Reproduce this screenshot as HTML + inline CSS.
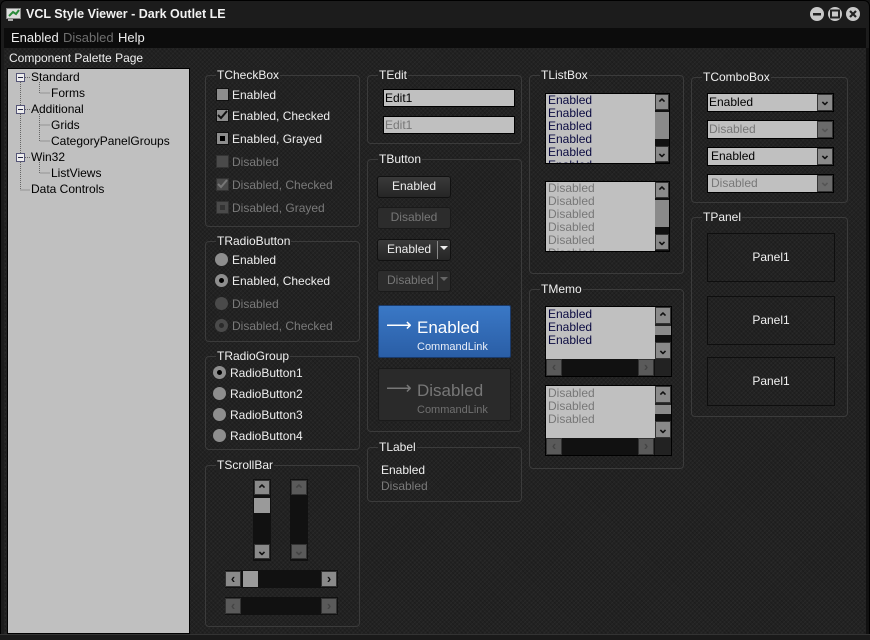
<!DOCTYPE html>
<html><head><meta charset="utf-8"><style>
*{margin:0;padding:0;box-sizing:border-box}
body{width:870px;height:640px;overflow:hidden;background:#141414;font-family:"Liberation Sans",sans-serif;font-size:12px;color:#eee;position:relative}
.a{position:absolute}
.win{left:0;top:0;width:870px;height:640px;background:#1c1c1c;border:1px solid #000;border-radius:6px 6px 0 0}
.client{left:4px;top:48px;width:862px;height:586px;background:#222;background-image:repeating-linear-gradient(45deg,rgba(0,0,0,.18) 0 1px,transparent 1px 3px),repeating-linear-gradient(-45deg,rgba(255,255,255,.03) 0 1px,transparent 1px 3px)}
.g{border:1px solid #3b3b3b;border-radius:4px}
.gl{position:absolute;top:-8px;left:10px;background:#222;padding:0 1px;color:#f0f0f0;line-height:14px}
.t{white-space:nowrap;line-height:14px}
.dis{color:#7a7a7a}
.cb{width:13px;height:13px;background:#8d8d8d;border:1px solid #111}
.rd{width:13px;height:13px;border-radius:50%;background:#8e8e8e}
.ed{background:#c0c0c0;border:1px solid #000;color:#000;padding:1px 0 0 1px;line-height:14px}
.btn{background:linear-gradient(#3a3a3a,#262626);border:1px solid #111;border-radius:3px;text-align:center;color:#eee;line-height:19px}
.btn.dis{color:#777;background:#2c2c2c;border-color:#1a1a1a}
.lb{background:#c0c0c0;border:1px solid #000;overflow:hidden;color:#0a0a40;line-height:13px;padding-left:2px}
.sb{background:#8a8a8a;border:1px solid #333;color:#111;font-size:13px;text-align:center;font-weight:bold;overflow:hidden}
.pan{border:1px solid #0e0e0e;text-align:center;color:#f0f0f0}
</style></head><body>
<div class="a win"></div>
<svg class="a" style="left:6px;top:7px" width="16" height="14"><rect x="0.5" y="1.5" width="14" height="10" fill="#ddd" stroke="#888"/><path d="M3 9 L7 5 L10 7 L13 3" stroke="#2a8a3a" stroke-width="2" fill="none"/><rect x="2" y="12" width="5" height="2" fill="#aaa"/></svg>
<div class="a t" style="left:26px;top:7px;font-weight:bold;color:#f2f2f2;font-size:12.5px">VCL Style Viewer - Dark Outlet LE</div>
<svg class="a" style="left:809px;top:6px" width="54" height="16">
<circle cx="8" cy="8" r="7" fill="#c8c8c8"/><rect x="4" y="7" width="8" height="2.5" fill="#222"/>
<circle cx="26" cy="8" r="7" fill="#c8c8c8"/><rect x="22" y="4.5" width="8" height="7" fill="none" stroke="#222" stroke-width="2"/>
<circle cx="44" cy="8" r="7" fill="#c8c8c8"/><path d="M41 5 L47 11 M47 5 L41 11" stroke="#222" stroke-width="2.2"/></svg>
<div class="a" style="left:4px;top:28px;width:862px;height:20px;background:#0c0c0c"></div>
<div class="a t" style="left:11px;top:31px;font-size:13px">Enabled</div>
<div class="a t" style="left:63px;top:31px;font-size:13px;color:#6f6f6f">Disabled</div>
<div class="a t" style="left:118px;top:31px;font-size:13px">Help</div>
<div class="a client"></div>
<div class="a t" style="left:9px;top:51px;color:#f0f0f0">Component Palette Page</div>
<div class="a" style="left:7px;top:68px;width:183px;height:566px;background:#c0c0c0;border:1px solid #000"></div>
<svg class="a" style="left:14px;top:72px" width="60" height="125">
<g stroke="#666" stroke-dasharray="1 1" fill="none">
<path d="M6.5 10 V118 H16"/><path d="M25.5 10 V21 H36"/><path d="M25.5 42 V69 H36 M25.5 53 H36"/><path d="M25.5 90 V101 H36"/><path d="M11 5.5 H16 M11 37.5 H16 M11 85.5 H16"/></g>
<g fill="#eee" stroke="#557"><rect x="2.5" y="1.5" width="8" height="8"/><rect x="2.5" y="33.5" width="8" height="8"/><rect x="2.5" y="81.5" width="8" height="8"/></g>
<g stroke="#224"><path d="M4 5.5H9M4 37.5H9M4 85.5H9"/></g></svg>
<div class="a t" style="left:31px;top:70px;color:#000">Standard</div>
<div class="a t" style="left:51px;top:86px;color:#000">Forms</div>
<div class="a t" style="left:31px;top:102px;color:#000">Additional</div>
<div class="a t" style="left:51px;top:118px;color:#000">Grids</div>
<div class="a t" style="left:51px;top:134px;color:#000">CategoryPanelGroups</div>
<div class="a t" style="left:31px;top:150px;color:#000">Win32</div>
<div class="a t" style="left:51px;top:166px;color:#000">ListViews</div>
<div class="a t" style="left:31px;top:182px;color:#000">Data Controls</div>

<div class="a g" style="left:205px;top:75px;width:155px;height:152px"><span class="gl">TCheckBox</span></div>
<div class="a cb" style="left:216px;top:88px"></div><div class="a t" style="left:232px;top:88px">Enabled</div>
<div class="a cb" style="left:216px;top:109px"></div><svg class="a" style="left:217px;top:110px" width="11" height="11"><path d="M1 5 L4 8 L10 1" stroke="#111" stroke-width="2" fill="none"/></svg><div class="a t" style="left:232px;top:109px">Enabled, Checked</div>
<div class="a cb" style="left:216px;top:132px"></div><div class="a" style="left:220px;top:136px;width:5px;height:5px;background:#000"></div><div class="a t" style="left:232px;top:132px">Enabled, Grayed</div>
<div class="a cb" style="left:216px;top:155px;background:#4a4a4a;border-color:#333"></div><div class="a t dis" style="left:232px;top:155px">Disabled</div>
<div class="a cb" style="left:216px;top:178px;background:#4a4a4a;border-color:#333"></div><svg class="a" style="left:217px;top:179px" width="11" height="11"><path d="M1 5 L4 8 L10 1" stroke="#777" stroke-width="2" fill="none"/></svg><div class="a t dis" style="left:232px;top:178px">Disabled, Checked</div>
<div class="a cb" style="left:216px;top:201px;background:#4a4a4a;border-color:#333"></div><div class="a" style="left:220px;top:205px;width:5px;height:5px;background:#333"></div><div class="a t dis" style="left:232px;top:201px">Disabled, Grayed</div>

<div class="a g" style="left:205px;top:241px;width:155px;height:101px"><span class="gl">TRadioButton</span></div>
<div class="a rd" style="left:215px;top:253px"></div><div class="a t" style="left:232px;top:253px">Enabled</div>
<div class="a rd" style="left:215px;top:274px"></div><div class="a" style="left:219px;top:278px;width:5px;height:5px;border-radius:50%;background:#000"></div><div class="a t" style="left:232px;top:274px">Enabled, Checked</div>
<div class="a rd" style="left:215px;top:297px;background:#4a4a4a"></div><div class="a t dis" style="left:232px;top:297px">Disabled</div>
<div class="a rd" style="left:215px;top:319px;background:#4a4a4a"></div><div class="a" style="left:219px;top:323px;width:5px;height:5px;border-radius:50%;background:#2a2a2a"></div><div class="a t dis" style="left:232px;top:319px">Disabled, Checked</div>

<div class="a g" style="left:205px;top:356px;width:155px;height:94px"><span class="gl">TRadioGroup</span></div>
<div class="a rd" style="left:213px;top:366px"></div><div class="a" style="left:217px;top:370px;width:5px;height:5px;border-radius:50%;background:#000"></div><div class="a t" style="left:230px;top:366px">RadioButton1</div>
<div class="a rd" style="left:213px;top:387px"></div><div class="a t" style="left:230px;top:387px">RadioButton2</div>
<div class="a rd" style="left:213px;top:408px"></div><div class="a t" style="left:230px;top:408px">RadioButton3</div>
<div class="a rd" style="left:213px;top:429px"></div><div class="a t" style="left:230px;top:429px">RadioButton4</div>

<div class="a g" style="left:205px;top:465px;width:155px;height:162px"><span class="gl">TScrollBar</span></div>
<div class="a" style="left:253px;top:479px;width:18px;height:82px;background:#111"></div>
<div class="a sb" style="left:254px;top:480px;width:16px;height:15px;line-height:17px">&#8963;</div>
<div class="a" style="left:254px;top:498px;width:16px;height:15px;background:#9a9a9a"></div>
<div class="a sb" style="left:254px;top:544px;width:16px;height:15px;line-height:11px">&#8964;</div>
<div class="a" style="left:290px;top:479px;width:18px;height:82px;background:#111"></div>
<div class="a sb" style="left:291px;top:480px;width:16px;height:15px;line-height:17px;background:#5a5a5a;color:#444">&#8963;</div>
<div class="a sb" style="left:291px;top:544px;width:16px;height:15px;line-height:11px;background:#5a5a5a;color:#444">&#8964;</div>
<div class="a" style="left:225px;top:570px;width:113px;height:18px;background:#111"></div>
<div class="a sb" style="left:225px;top:571px;width:16px;height:16px;line-height:14px">&lsaquo;</div>
<div class="a" style="left:243px;top:571px;width:15px;height:16px;background:#9a9a9a"></div>
<div class="a sb" style="left:321px;top:571px;width:16px;height:16px;line-height:14px">&rsaquo;</div>
<div class="a" style="left:225px;top:597px;width:113px;height:18px;background:#111"></div>
<div class="a sb" style="left:225px;top:598px;width:16px;height:16px;line-height:14px;background:#5a5a5a;color:#444">&lsaquo;</div>
<div class="a sb" style="left:321px;top:598px;width:16px;height:16px;line-height:14px;background:#5a5a5a;color:#444">&rsaquo;</div>

<div class="a g" style="left:367px;top:75px;width:155px;height:69px"><span class="gl">TEdit</span></div>
<div class="a ed" style="left:383px;top:89px;width:132px;height:18px">Edit1</div>
<div class="a ed" style="left:383px;top:116px;width:132px;height:18px;color:#777">Edit1</div>

<div class="a g" style="left:367px;top:159px;width:155px;height:273px"><span class="gl">TButton</span></div>
<div class="a btn" style="left:377px;top:176px;width:74px;height:22px">Enabled</div>
<div class="a btn dis" style="left:377px;top:207px;width:74px;height:22px">Disabled</div>
<div class="a btn" style="left:377px;top:239px;width:74px;height:22px;text-align:left;padding-left:9px">Enabled</div>
<div class="a" style="left:437px;top:241px;width:1px;height:18px;background:#888"></div>
<svg class="a" style="left:440px;top:246px" width="9" height="6"><path d="M0 0H8L4 4Z" fill="#eee"/></svg>
<div class="a btn dis" style="left:377px;top:270px;width:74px;height:22px;text-align:left;padding-left:9px">Disabled</div>
<div class="a" style="left:437px;top:272px;width:1px;height:18px;background:#555"></div>
<svg class="a" style="left:440px;top:277px" width="9" height="6"><path d="M0 0H8L4 4Z" fill="#666"/></svg>
<div class="a" style="left:378px;top:305px;width:133px;height:53px;background:linear-gradient(#3a78c6,#2a5ea6);border:1px solid #1a3a6a;border-radius:2px"></div>
<div class="a t" style="left:386px;top:318px;font-size:18px;color:#fff">&#10230;</div>
<div class="a t" style="left:417px;top:318px;font-size:17px;line-height:20px;color:#fff">Enabled</div>
<div class="a t" style="left:417px;top:340px;font-size:11px;color:#e8eef8">CommandLink</div>
<div class="a" style="left:378px;top:368px;width:133px;height:53px;background:#2a2a2a;border:1px solid #1a1a1a;border-radius:2px"></div>
<div class="a t" style="left:386px;top:381px;font-size:18px;color:#777">&#10230;</div>
<div class="a t" style="left:417px;top:381px;font-size:17px;line-height:20px;color:#777">Disabled</div>
<div class="a t" style="left:417px;top:403px;font-size:11px;color:#707070">CommandLink</div>

<div class="a g" style="left:367px;top:447px;width:155px;height:55px"><span class="gl">TLabel</span></div>
<div class="a t" style="left:381px;top:463px">Enabled</div>
<div class="a t dis" style="left:381px;top:479px">Disabled</div>

<div class="a g" style="left:529px;top:75px;width:155px;height:199px"><span class="gl">TListBox</span></div>
<div class="a lb" style="left:545px;top:93px;width:125px;height:71px">Enabled<br>Enabled<br>Enabled<br>Enabled<br>Enabled<br>Enabled</div>
<div class="a" style="left:655px;top:94px;width:14px;height:69px;background:#111"></div>
<div class="a sb" style="left:655px;top:94px;width:14px;height:16px;line-height:18px">&#8963;</div>
<div class="a" style="left:655px;top:112px;width:14px;height:27px;background:#8a8a8a"></div>
<div class="a sb" style="left:655px;top:146px;width:14px;height:16px;line-height:12px">&#8964;</div>
<div class="a lb" style="left:545px;top:181px;width:125px;height:71px;color:#777">Disabled<br>Disabled<br>Disabled<br>Disabled<br>Disabled<br>Disabled</div>
<div class="a" style="left:655px;top:182px;width:14px;height:69px;background:#111"></div>
<div class="a sb" style="left:655px;top:182px;width:14px;height:16px;line-height:18px">&#8963;</div>
<div class="a" style="left:655px;top:200px;width:14px;height:27px;background:#8a8a8a"></div>
<div class="a sb" style="left:655px;top:234px;width:14px;height:16px;line-height:12px">&#8964;</div>

<div class="a g" style="left:529px;top:289px;width:155px;height:180px"><span class="gl">TMemo</span></div>
<div class="a lb" style="left:545px;top:306px;width:127px;height:71px;padding-top:1px">Enabled<br>Enabled<br>Enabled</div>
<div class="a" style="left:655px;top:307px;width:16px;height:69px;background:#222"></div>
<div class="a sb" style="left:655px;top:307px;width:16px;height:17px;line-height:19px">&#8963;</div>
<div class="a" style="left:655px;top:326px;width:16px;height:9px;background:#8a8a8a"></div>
<div class="a" style="left:655px;top:335px;width:16px;height:7px;background:#111"></div>
<div class="a sb" style="left:655px;top:342px;width:16px;height:17px;line-height:13px">&#8964;</div>
<div class="a" style="left:546px;top:359px;width:109px;height:17px;background:#111"></div>
<div class="a sb" style="left:546px;top:359px;width:16px;height:17px;background:#5a5a5a;color:#444;line-height:14px">&lsaquo;</div>
<div class="a sb" style="left:638px;top:359px;width:16px;height:17px;background:#5a5a5a;color:#444;line-height:14px">&rsaquo;</div>
<div class="a lb" style="left:545px;top:385px;width:127px;height:71px;padding-top:1px;color:#777">Disabled<br>Disabled<br>Disabled</div>
<div class="a" style="left:655px;top:386px;width:16px;height:69px;background:#222"></div>
<div class="a sb" style="left:655px;top:386px;width:16px;height:17px;line-height:19px">&#8963;</div>
<div class="a" style="left:655px;top:405px;width:16px;height:9px;background:#8a8a8a"></div>
<div class="a" style="left:655px;top:414px;width:16px;height:7px;background:#111"></div>
<div class="a sb" style="left:655px;top:421px;width:16px;height:17px;line-height:13px">&#8964;</div>
<div class="a" style="left:546px;top:438px;width:109px;height:17px;background:#111"></div>
<div class="a sb" style="left:546px;top:438px;width:16px;height:17px;background:#5a5a5a;color:#444;line-height:14px">&lsaquo;</div>
<div class="a sb" style="left:638px;top:438px;width:16px;height:17px;background:#5a5a5a;color:#444;line-height:14px">&rsaquo;</div>

<div class="a g" style="left:691px;top:77px;width:157px;height:126px"><span class="gl">TComboBox</span></div>
<div class="a ed" style="left:707px;top:93px;width:127px;height:19px;line-height:15px">Enabled</div>
<div class="a sb" style="left:817px;top:94px;width:16px;height:17px;line-height:12px">&#8964;</div>
<div class="a ed" style="left:707px;top:120px;width:127px;height:19px;line-height:15px;color:#777">Disabled</div>
<div class="a sb" style="left:817px;top:121px;width:16px;height:17px;line-height:12px;background:#6a6a6a;color:#555">&#8964;</div>
<div class="a ed" style="left:707px;top:147px;width:127px;height:19px;line-height:15px;padding-left:3px">Enabled</div>
<div class="a sb" style="left:817px;top:148px;width:16px;height:17px;line-height:12px">&#8964;</div>
<div class="a ed" style="left:707px;top:174px;width:127px;height:19px;line-height:15px;color:#777;padding-left:3px">Disabled</div>
<div class="a sb" style="left:817px;top:175px;width:16px;height:17px;line-height:12px;background:#6a6a6a;color:#555">&#8964;</div>

<div class="a g" style="left:691px;top:217px;width:157px;height:200px"><span class="gl">TPanel</span></div>
<div class="a pan" style="left:707px;top:233px;width:128px;height:49px;line-height:47px">Panel1</div>
<div class="a pan" style="left:707px;top:296px;width:128px;height:49px;line-height:47px">Panel1</div>
<div class="a pan" style="left:707px;top:357px;width:128px;height:49px;line-height:47px">Panel1</div>
<div class="a" style="left:866px;top:48px;width:3px;height:590px;background:#111"></div>
<div class="a" style="left:0;top:634px;width:870px;height:6px;background:#1a1a1a;border-top:1px solid #333"></div>
</body></html>
